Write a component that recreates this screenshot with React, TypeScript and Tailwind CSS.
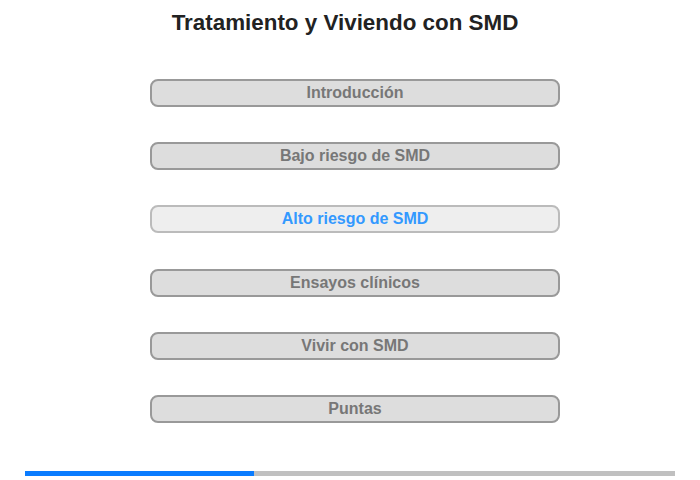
import React from 'react';

const items = [
  { label: 'Introducción', active: false },
  { label: 'Bajo riesgo de SMD', active: false },
  { label: 'Alto riesgo de SMD', active: true },
  { label: 'Ensayos clínicos', active: false },
  { label: 'Vivir con SMD', active: false },
  { label: 'Puntas', active: false },
];

const MenuButton: React.FC<{ label: string; active: boolean }> = ({ label, active }) => (
  <button
    className={
      active
        ? 'w-[410px] h-[28px] rounded-[8px] border-2 border-[#bbbbbb] bg-[#eeeeee] text-[#3399ff] text-[16px] font-bold leading-none'
        : 'w-[410px] h-[28px] rounded-[8px] border-2 border-[#999999] bg-[#dddddd] text-[#777777] text-[16px] font-bold leading-none'
    }
  >
    {label}
  </button>
);

const App: React.FC = () => {
  return (
    <div className="w-[700px] h-[480px] bg-white font-['Liberation_Sans',Arial,sans-serif] flex flex-col">
      <h1 className="pt-[10px] h-[36px] text-center pr-[10px] text-[22.4px] font-bold text-[#222222] leading-[26px]">
        Tratamiento y Viviendo con SMD
      </h1>
      <div className="mt-[43px] pl-[150px] flex flex-col gap-[35.2px]">
        {items.map(item => <MenuButton key={item.label} label={item.label} active={item.active} />)}
      </div>
      <div className="mt-auto mb-[4px] mx-[25px] h-[5px] bg-[#c0c0c0] flex">
        <div className="w-[229px] h-full bg-[#0a7cff]" />
      </div>
    </div>
  );
};

export default App;
